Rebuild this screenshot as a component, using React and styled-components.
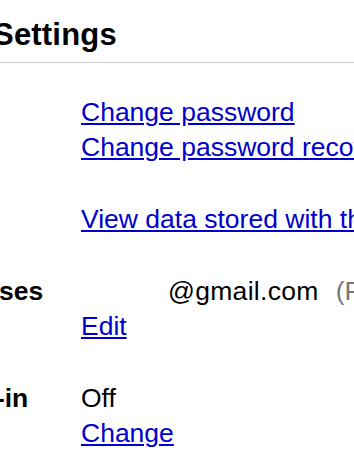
import React from "react";
import styled, { createGlobalStyle } from "styled-components";

const Global = createGlobalStyle`
  html, body { margin: 0; padding: 0; background: #fff; overflow: hidden; }
  body { font-family: "Liberation Sans", Arial, sans-serif; color: #000; }
`;

const Page = styled.div`
  width: 354px;
  height: 460px;
  overflow: hidden;
  background: #fff;
`;

const Header = styled.header`
  padding: 17px 0 9px;
  border-bottom: 1px solid #cbcbcb;
`;

const Title = styled.h1`
  margin: 0 0 0 -7px;
  font-size: 31px;
  line-height: 36px;
  font-weight: bold;
  letter-spacing: 0.2px;
  white-space: nowrap;
`;

const Table = styled.div`
  margin: 32px 0 0 -166px;
  display: grid;
  grid-template-columns: 247px max-content;
  row-gap: 37px;
  font-size: 26.5px;
  line-height: 35px;
  white-space: nowrap;
`;

const Label = styled.div`
  font-weight: bold;
`;

const Value = styled.div`
  display: flex;
  flex-direction: column;
  align-items: flex-start;
`;

const Link = styled.a`
  color: #0000cc;
  text-decoration: underline;
  cursor: pointer;
`;

const Hidden = styled.span`
  display: inline-block;
  width: 87px;
`;

const Email = styled.span`
  letter-spacing: 0.3px;
`;

const Note = styled.span`
  color: #777;
  margin-left: 17px;
`;

const rows = [
  { label: "Security", lines: [{ link: "Change password" }, { link: "Change password recovery options" }] },
  { label: "Dashboard", lines: [{ link: "View data stored with this account" }] },
  {
    label: "Email addresses",
    lines: [{ email: "@gmail.com", note: "(Primary email)" }, { link: "Edit" }],
  },
  { label: "Multiple sign-in", lines: [{ text: "Off" }, { link: "Change" }] },
];

export default function App() {
  return (
    <Page>
      <Global />
      <Header>
        <Title>Settings</Title>
      </Header>
      <Table>
        {rows.map((r) => (
          <React.Fragment key={r.label}>
            <Label>{r.label}</Label>
            <Value>
              {r.lines.map((l, i) =>
                l.link ? (
                  <Link key={i} href="#">{l.link}</Link>
                ) : l.email ? (
                  <span key={i}>
                    <Hidden />
                    <Email>{l.email}</Email>
                    <Note>{l.note}</Note>
                  </span>
                ) : (
                  <span key={i}>{l.text}</span>
                )
              )}
            </Value>
          </React.Fragment>
        ))}
      </Table>
    </Page>
  );
}
